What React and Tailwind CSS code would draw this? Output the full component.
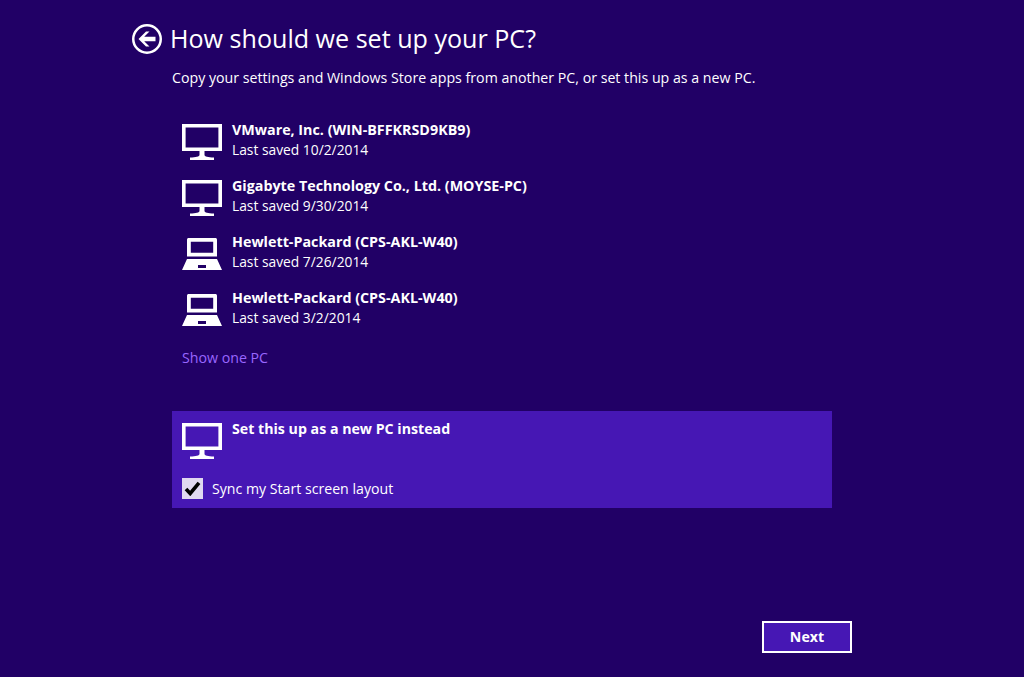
import React from 'react'

const font = { fontFamily: '"Open Sans", "Noto Sans", sans-serif' }

const pcs = [
  { type: 'desktop', name: 'VMware, Inc. (WIN-BFFKRSD9KB9)', saved: 'Last saved 10/2/2014' },
  { type: 'desktop', name: 'Gigabyte Technology Co., Ltd. (MOYSE-PC)', saved: 'Last saved 9/30/2014' },
  { type: 'laptop', name: 'Hewlett-Packard (CPS-AKL-W40)', saved: 'Last saved 7/26/2014' },
  { type: 'laptop', name: 'Hewlett-Packard (CPS-AKL-W40)', saved: 'Last saved 3/2/2014' },
]

const DesktopIcon = () => (
  <svg width="40" height="36" viewBox="0 0 40 36" fill="none" className="shrink-0">
    <path fillRule="evenodd" fill="white" d="M0 0H40V27H0ZM3.6 3.6V23.4H36.4V3.6Z" />
    <path fill="white" d="M17.5 27H22.5V31C22.5 32.5 26 33.2 32 33.6V36H8V33.6C14 33.2 17.5 32.5 17.5 31Z" />
  </svg>
)

const LaptopIcon = () => (
  <svg width="40" height="36" viewBox="0 0 40 36" fill="none" className="shrink-0">
    <path fillRule="evenodd" fill="white" d="M7 2C5.5 2 5 2.5 5 4V20.5H35V4C35 2.5 34.5 2 33 2ZM8.8 5.8H31.2V16.8H8.8Z" />
    <path fillRule="evenodd" fill="white" d="M5 23H35L40 34H0ZM16 29V32H24V29Z" />
  </svg>
)

const App = () => {
  return (
    <div className="w-[1024px] h-[677px] bg-[#210066] text-white overflow-hidden flex flex-col" style={font}>
      <div className="flex items-center gap-2 pl-[132px] pt-[24px] h-[54px]">
        <svg width="30" height="30" viewBox="0 0 30 30" fill="none" className="shrink-0">
          <circle cx="15" cy="15" r="13.75" stroke="white" strokeWidth="2.5" />
          <path fill="white" d="M6.5 15L14 7.5H17.5L12.2 12.8H23.5V17.2H12.2L17.5 22.5H14Z" />
        </svg>
        <h1 className="text-[25.1px] leading-[30px] font-normal -mt-[2px]">How should we set up your PC?</h1>
      </div>

      <div className="pl-[172px]">
        <p className="mt-[14px] text-[14.2px] leading-[20px]">
          Copy your settings and Windows Store apps from another PC, or set this up as a new PC.
        </p>

        <div className="mt-[28px] pl-[10px]">
          {pcs.map((pc, i) => (
            <div key={i} className="flex gap-[10px] h-[56px] pt-[8px]">
              {pc.type === 'desktop' ? <DesktopIcon /> : <LaptopIcon />}
              <div className="-mt-[4px] leading-[20px]">
                <div className="font-bold text-[14.3px]">{pc.name}</div>
                <div className="text-[13.8px]">{pc.saved}</div>
              </div>
            </div>
          ))}
          <a className="block mt-[8px] text-[14.2px] leading-[20px] text-[#9966ff]">Show one PC</a>
        </div>

        <div className="mt-[43px] w-[660px] h-[97px] bg-[#4617b4] pl-[10px] pt-[12px]">
          <div className="flex gap-[10px]">
            <DesktopIcon />
            <div className="-mt-[4px] text-[14.2px] leading-[20px] font-bold">Set this up as a new PC instead</div>
          </div>
          <label className="mt-[19px] flex items-center gap-[9px] text-[14.15px] leading-[20px]">
            <span className="w-[21px] h-[21px] bg-[#e0d8f0] flex items-center justify-center">
              <svg width="17" height="15" viewBox="0 0 17 15" fill="none">
                <path d="M2 8L6.2 12.5L15 1.8" stroke="black" strokeWidth="3.6" />
              </svg>
            </span>
            Sync my Start screen layout
          </label>
        </div>
      </div>

      <div className="flex justify-end pr-[172px] mt-[113px]">
        <button className="w-[90px] h-[32px] border-2 border-white bg-[#4617b4] text-[14.2px] leading-[28px] font-bold text-white">
          Next
        </button>
      </div>
    </div>
  )
}

export default App
